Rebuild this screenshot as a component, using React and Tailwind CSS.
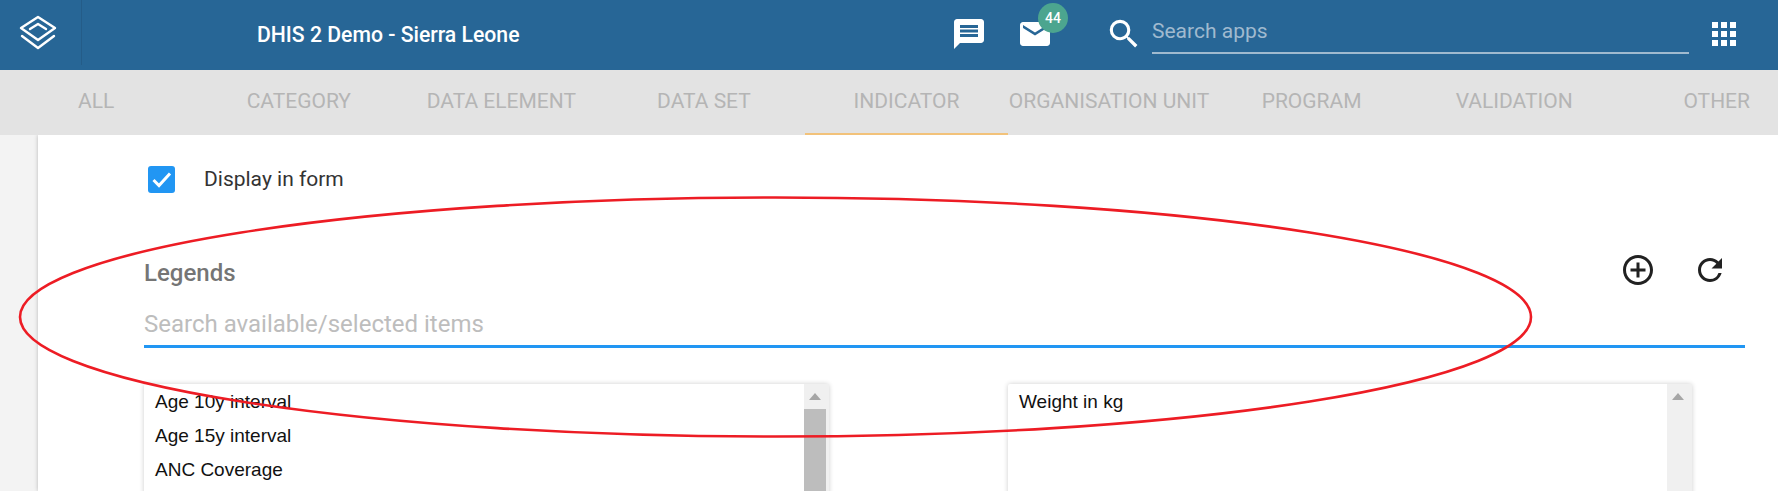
import { MdAddCircleOutline, MdApps, MdEmail, MdMessage, MdRefresh, MdSearch } from "react-icons/md";

const tabs = ["All", "Category", "Data element", "Data set", "Indicator", "Organisation unit", "Program", "Validation", "Other"];

function Logo() {
  return (
    <svg width="40" height="36" viewBox="0 0 40 36" fill="none" stroke="white" strokeWidth="2.4" strokeLinejoin="round" strokeLinecap="round">
      <path d="M20 2 L37 13 L20 25 L3 13 Z" />
      <path d="M12 14 L20 9 L28 14" />
      <path d="M4 21 L20 33 L36 21" />
    </svg>
  );
}

function ListBox({ items, className, thumb }) {
  return (
    <div className={`flex h-[140px] bg-white shadow-[0_0_5px_rgba(0,0,0,0.2)] rounded-[2px] ${className}`}>
      <ul className="flex-1 pl-[11px] pt-[1px] text-[19px] leading-[34px] text-[#111] font-['Liberation_Sans',sans-serif]">
        {items.map((item) => (
          <li key={item}>{item}</li>
        ))}
      </ul>
      <div className="flex w-[25px] flex-col bg-[#f0f0f0] pr-[3px]">
        <div className="flex h-[25px] items-center justify-center">
          <div className="h-0 w-0 border-x-[6px] border-b-[7px] border-x-transparent border-b-[#a6a6a6]" />
        </div>
        {thumb && <div className="flex-1 bg-[#bdbdbd]" />}
      </div>
    </div>
  );
}

export default function App() {
  return (
    <div className="relative h-[491px] w-[1778px] overflow-hidden bg-[#f3f3f3] font-['Roboto',sans-serif]">
      <header className="flex h-[70px] items-start bg-[#276696] text-white">
        <div className="flex h-[65px] w-[82px] items-center border-r border-[#245c88] pl-[18px]">
          <Logo />
        </div>
        <div className="ml-[175px] mt-[21px] w-[660px] whitespace-nowrap text-[21.2px] font-medium leading-[28px]">DHIS 2 Demo - Sierra Leone</div>
        <div className="ml-[34px] mt-[16px] flex">
          <MdMessage className="text-white" size={36} />
          <div className="relative ml-[30px]">
            <MdEmail className="text-white" size={36} />
            <span className="absolute left-[21px] top-[-13px] flex h-[30px] w-[30px] items-center justify-center rounded-full bg-[#4ca58f] text-[14px] font-medium">44</span>
          </div>
        </div>
        <MdSearch className="ml-[52px] mt-[15px] text-white" size={38} />
        <div className="ml-[9px] mt-[16px] h-[38px] w-[537px] border-b-2 border-[#a0bacf] text-[21px] leading-[30px] text-[#a0bacf]">Search apps</div>
        <MdApps className="ml-[17px] mt-[16px] text-white" size={36} />
      </header>

      <nav className="relative z-10 -ml-[5px] grid h-[65px] w-[1823px] grid-cols-9 bg-[#e3e3e3]">
        {tabs.map((tab) => (
          <div
            key={tab}
            className={`flex items-center justify-center whitespace-nowrap border-b-2 text-[21px] uppercase text-[#b5b5b5] ${tab === "Indicator" ? "border-[#f2c27a]" : "border-transparent"}`}
          >
            {tab}
          </div>
        ))}
      </nav>

      <main className="ml-[38px] h-[356px] bg-white pl-[106px] pr-[33px] shadow-[0_0_4px_rgba(0,0,0,0.25)]">
        <div className="flex items-center pl-[4px] pt-[31px]">
          <span className="flex h-[27px] w-[27px] items-center justify-center rounded-[3px] bg-[#2196f3]">
            <svg width="27" height="27" viewBox="0 0 27 27" fill="none" stroke="white" strokeWidth="3">
              <path d="M5.5 14 L11 19.5 L22 7.5" />
            </svg>
          </span>
          <span className="ml-[29px] text-[21px] leading-[27px] text-[#333]">Display in form</span>
        </div>

        <div className="mt-[62px] flex items-start justify-between pr-[17px]">
          <h2 className="text-[24px] font-medium leading-[36px] text-[#757575]">Legends</h2>
          <div className="-mt-[3px] flex gap-[36px]">
            <MdAddCircleOutline className="text-[#212121]" size={36} />
            <MdRefresh className="text-[#212121]" size={36} />
          </div>
        </div>

        <div className="mt-[15px] h-[42px] border-b-[3px] border-[#2196f3] text-[24px] leading-[36px] text-[#bdbdbd]">
          Search available/selected items
        </div>

        <div className="mt-[36px] flex">
          <ListBox className="w-[685px]" items={["Age 10y interval", "Age 15y interval", "ANC Coverage"]} thumb />
          <ListBox className="ml-[179px] w-[684px]" items={["Weight in kg"]} />
        </div>
      </main>

      {/* red ring drawn over the page */}
      <svg className="pointer-events-none absolute left-0 top-0 z-20" width="1778" height="491" fill="none">
        <ellipse cx="775.5" cy="317" rx="755.5" ry="119.5" stroke="#ed1c24" strokeWidth="2.6" />
      </svg>
    </div>
  );
}
